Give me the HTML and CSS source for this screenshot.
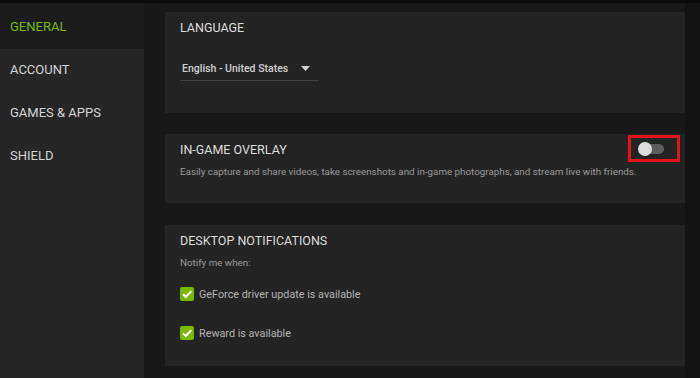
FILE: index.html
```html
<!DOCTYPE html>
<html lang="en">
<head>
<meta charset="utf-8">
<title>Settings - General</title>
<link rel="stylesheet" href="styles.css">
</head>
<body>
<div class="topbar"></div>
<div class="app">
  <nav class="sidebar">
    <div class="nav-item active">GENERAL</div>
    <div class="nav-item">ACCOUNT</div>
    <div class="nav-item">GAMES &amp; APPS</div>
    <div class="nav-item">SHIELD</div>
  </nav>
  <main class="main">
    <section class="card card-language">
      <h2 class="card-title">LANGUAGE</h2>
      <div class="dropdown">
        <span class="dropdown-value">English - United States</span>
        <svg class="dropdown-arrow" width="9" height="5" viewBox="0 0 9 5"><path d="M0 0H9L4.5 5Z" fill="#cfcfcf"/></svg>
      </div>
    </section>
    <section class="card card-overlay">
      <div class="card-head">
        <h2 class="card-title">IN-GAME OVERLAY</h2>
        <div class="toggle"><span class="toggle-track"></span><span class="toggle-knob"></span></div>
      </div>
      <p class="card-desc">Easily capture and share videos, take screenshots and in-game photographs, and stream live with friends.</p>
      <div class="highlight-box"></div>
    </section>
    <section class="card card-notify">
      <h2 class="card-title">DESKTOP NOTIFICATIONS</h2>
      <p class="card-desc">Notify me when:</p>
      <label class="check-row first">
        <span class="checkbox"><svg width="14" height="14" viewBox="0 0 14 14"><path d="M3 7.2L5.8 10L11.2 4.2" fill="none" stroke="#fff" stroke-width="2"/></svg></span>
        <span class="check-label">GeForce driver update is available</span>
      </label>
      <label class="check-row">
        <span class="checkbox"><svg width="14" height="14" viewBox="0 0 14 14"><path d="M3 7.2L5.8 10L11.2 4.2" fill="none" stroke="#fff" stroke-width="2"/></svg></span>
        <span class="check-label">Reward is available</span>
      </label>
    </section>
  </main>
  <div class="edge"></div>
</div>
</body>
</html>
```

FILE: styles.css
```css
* { box-sizing: border-box; }
html, body { margin: 0; padding: 0; }
body {
  width: 700px;
  height: 378px;
  overflow: hidden;
  background: #181818;
  font-family: Roboto, "Liberation Sans", Arial, sans-serif;
  color: #d2d2d2;
}
.topbar { height: 3px; background: #0b0b0b; }
.app {
  display: grid;
  grid-template-columns: 144px 1fr 15px;
  height: 375px;
}
.sidebar { background: #262626; }
.nav-item {
  font-size: 13px;
  line-height: 16px;
  height: 43px;
  padding: 13px 0 0 10px;
  color: #d4d4d4;
}
.nav-item.active {
  height: 46px;
  padding-top: 16px;
  background: #1b1b1b;
  color: #76b900;
}
.main {
  padding: 9px 0 0 21px;
  display: flex;
  flex-direction: column;
}
.edge { background: #131313; }
.card {
  position: relative;
  background: #242424;
  padding: 8px 15px 0 15px;
}
.card-language { height: 101px; }
.card-overlay { height: 69px; margin-top: 21px; }
.card-notify { height: 141px; margin-top: 22px; }
.card-title {
  margin: 0;
  font-size: 12.5px;
  line-height: 16px;
  font-weight: 400;
  color: #dcdcdc;
}
.card-head { display: flex; justify-content: space-between; align-items: center; }
.dropdown {
  margin-top: 21px;
  width: 139px;
  height: 24px;
  border-bottom: 1px solid #424242;
  display: flex;
  align-items: center;
  padding: 0 0 0 2px;
  justify-content: space-between;
}
.dropdown-value { font-size: 10.5px; font-weight: 500; color: #d0d0d0; }
.dropdown-arrow { margin-right: 9px; }
.card-desc {
  margin: 7px 0 0 0;
  font-size: 9.8px;
  line-height: 14px;
  color: #9a9a9a;
}
.toggle { position: relative; width: 26px; height: 14px; margin-right: 6px; margin-top: -3px; }
.toggle-track {
  position: absolute; left: 3px; top: 2px;
  width: 23px; height: 10px; border-radius: 5px;
  background: #5c5c5c;
}
.toggle-knob {
  position: absolute; left: 0; top: 0;
  width: 14px; height: 14px; border-radius: 50%;
  background: #dcdcdc;
}
.highlight-box {
  position: absolute;
  left: 463px; top: 1px;
  width: 52px; height: 27px;
  border: 3px solid #e0141c;
}
.check-row {
  display: flex;
  align-items: center;
  height: 16px;
}
.check-row.first { margin-top: 16px; }
.check-row + .check-row { margin-top: 23px; }
.checkbox {
  width: 14px; height: 14px;
  border-radius: 2px;
  background: #76b900;
  display: flex;
}
.check-label {
  margin-left: 5px;
  font-size: 10.8px;
  color: #b4b4b4;
}
```
